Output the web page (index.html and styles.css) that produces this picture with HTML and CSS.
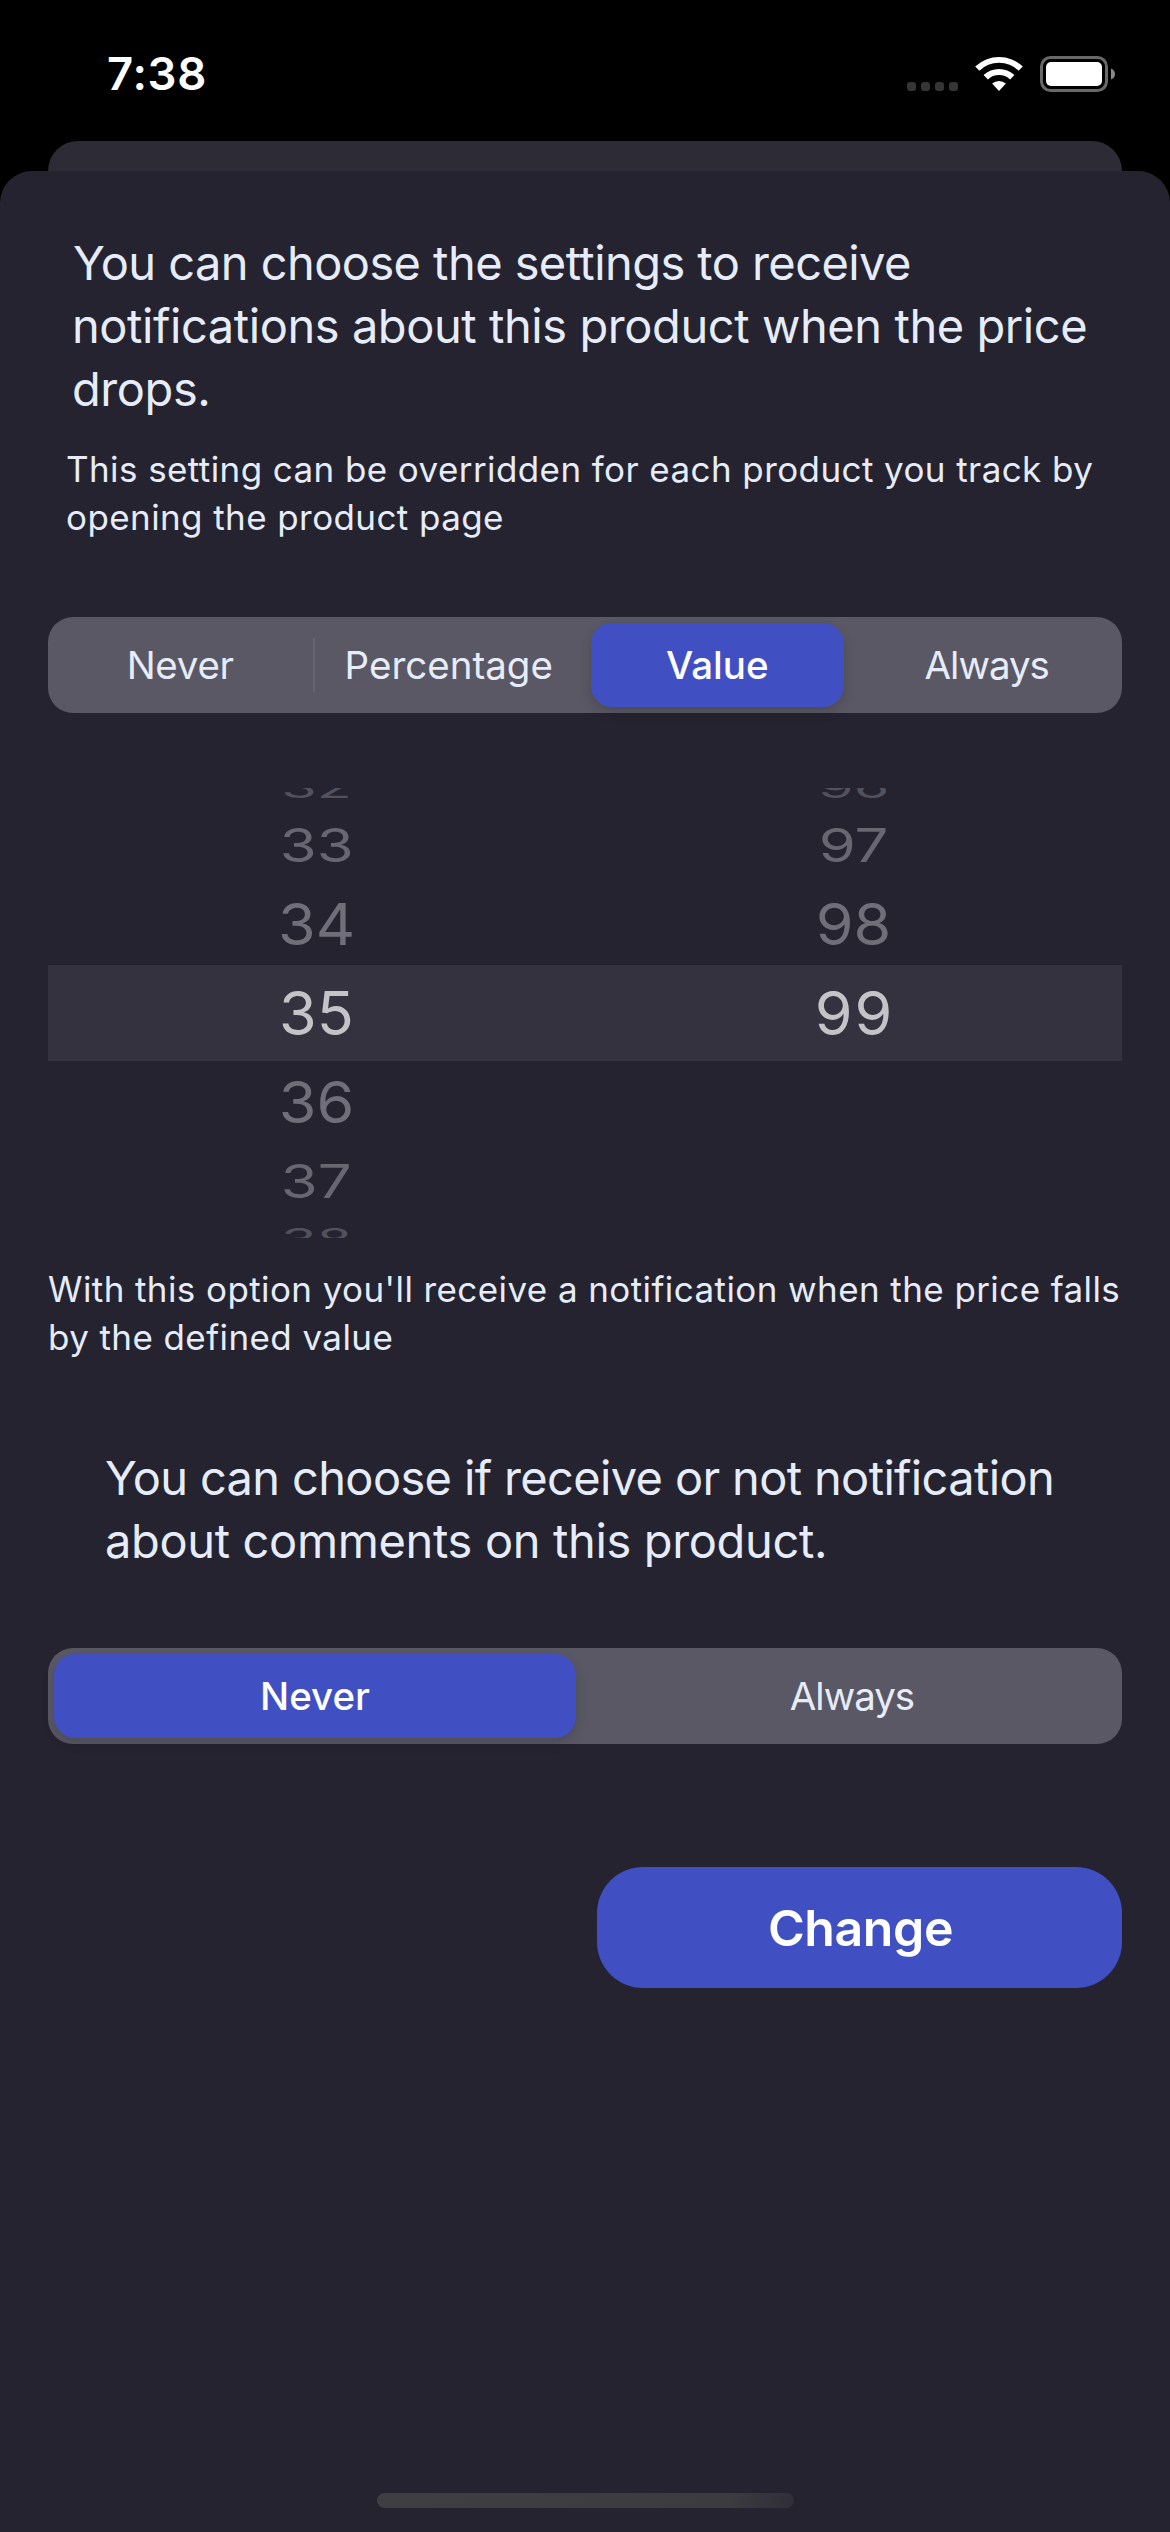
FILE: index.html
```html
<!DOCTYPE html>
<html lang="en">
<head>
<meta charset="utf-8">
<title>Notification settings</title>
<link rel="stylesheet" href="styles.css">
</head>
<body>
<header class="status">
  <div class="time">7:38</div>
  <div class="indicators">
    <div class="signal"><i></i><i></i><i></i><i></i></div>
    <svg class="wifi" width="50" height="38" viewBox="0 0 50 38">
      <path d="M1.2 11.6A34.5 34.5 0 0 1 48.8 11.6L44.6 15.8A28 28 0 0 0 5.4 15.8Z"/>
      <path d="M9.6 20.1A22.4 22.4 0 0 1 40.4 20.1L36.1 24.4A16.2 16.2 0 0 0 13.9 24.4Z"/>
      <path d="M18.1 28.6A10.4 10.4 0 0 1 31.9 28.6L25 36Z"/>
    </svg>
    <svg class="battery" width="76" height="36" viewBox="0 0 76 36">
      <rect x="1.5" y="1.5" width="65" height="33" rx="9" fill="none" stroke="#696969" stroke-width="3"/>
      <rect x="6" y="6" width="56" height="24" rx="5" fill="#fff"/>
      <path d="M71 12.5Q75 14 75 18Q75 22 71 23.5Z" fill="#8a8a8a"/>
    </svg>
  </div>
</header>
<div class="card-behind"></div>
<main class="sheet">
  <p class="lead"><span class="l1">You can choose the settings to receive</span><br><span class="l2">notifications about this product when the price</span><br><span class="l2">drops.</span></p>
  <p class="note inset">This setting can be overridden for each product you track by<br>opening the product page</p>

  <div class="segmented four">
    <div class="segment divided"><span class="never">Never</span></div>
    <div class="segment"><span>Percentage</span></div>
    <div class="segment selected"><span>Value</span></div>
    <div class="segment last"><span class="always">Always</span></div>
  </div>

  <div class="picker">
    <div class="wheel">
      <div class="row far"><span>32</span></div>
      <div class="row mid"><span>33</span></div>
      <div class="row near"><span>34</span></div>
      <div class="row current"><span>35</span></div>
      <div class="row near"><span>36</span></div>
      <div class="row mid"><span>37</span></div>
      <div class="row far"><span>38</span></div>
    </div>
    <div class="wheel">
      <div class="row far"><span>96</span></div>
      <div class="row mid"><span>97</span></div>
      <div class="row near"><span>98</span></div>
      <div class="row current wide"><span>99</span></div>
    </div>
  </div>

  <p class="note">With this option you'll receive a notification when the price falls<br>by the defined value</p>
  <p class="lead comments"><span class="l3">You can choose if receive or not notification</span><br><span class="l4">about comments on this product.</span></p>

  <div class="segmented two">
    <div class="segment selected"><span>Never</span></div>
    <div class="segment"><span class="always">Always</span></div>
  </div>

  <button class="change">Change</button>
  <div class="home"></div>
</main>
</body>
</html>
```
FILE: styles.css
```css
* { box-sizing: border-box; }

body {
  margin: 0;
  width: 1170px;
  height: 2532px;
  display: flex;
  flex-direction: column;
  overflow: hidden;
  background: #000;
  color: #e6ecf9;
  font-family: Inter, "Liberation Sans", sans-serif;
}

p { margin: 0; white-space: nowrap; }

.status {
  height: 141px;
  padding: 0 54px 0 107px;
  display: flex;
  justify-content: space-between;
}

.time {
  padding-top: 46px;
  color: #fff;
  font-size: 45.5px;
  font-weight: 600;
  line-height: 56px;
  letter-spacing: 0.7px;
}

.indicators { display: flex; }

.signal {
  display: flex;
  gap: 5px;
  padding-top: 82px;
  margin-right: 16px;
}

.signal i {
  width: 9px;
  height: 9px;
  border-radius: 3px;
  background: #353535;
}

.wifi { margin: 55px 16px 0 0; fill: #fff; }
.battery { margin-top: 56px; }

.card-behind {
  flex: none;
  height: 30px;
  margin: 0 48px;
  border-radius: 30px 30px 0 0;
  background: #2d2b35;
}

.sheet {
  flex: 1;
  display: flex;
  flex-direction: column;
  padding: 60px 48px 24px;
  border-radius: 32px 32px 0 0;
  background: #252330;
}

.lead {
  padding-left: 25px;
  font-size: 47px;
  line-height: 63px;
  letter-spacing: -0.43px;
}

.l1 { letter-spacing: -0.567px; }
.l2 { margin-left: -1px; }
.l3 { letter-spacing: -0.646px; }
.l4 { letter-spacing: -0.355px; }

.note {
  font-size: 35px;
  line-height: 48px;
  letter-spacing: 0.41px;
}

.note.inset { padding-left: 18px; margin-top: 25px; }

.segmented {
  flex: none;
  display: grid;
  height: 96px;
  border-radius: 25px;
  background: #5a5864;
  font-size: 38.5px;
}

.four { grid-template-columns: repeat(4, 1fr); margin-top: 76px; }
.two { grid-template-columns: repeat(2, 1fr); margin-top: 76px; }

.segment {
  display: flex;
  align-items: center;
  justify-content: center;
  padding-bottom: 1px;
  margin: 6px 10px 6px 6px;
  border-radius: 21px;
}

.two .segment { margin-right: 9px; }

.segment.selected {
  background: #4050c3;
  color: #fff;
  font-weight: 500;
  box-shadow: 0 5px 12px rgba(0, 0, 0, 0.16);
}

.segment.divided {
  margin: 21px 2px 21px 0;
  padding-bottom: 1px;
  border-right: 2px solid #66646f;
  border-radius: 0;
}

.segment.last { padding-left: 2px; }
.never { letter-spacing: -0.26px; }
.always { letter-spacing: -1px; }

.picker {
  flex: none;
  display: grid;
  grid-template-columns: repeat(2, 1fr);
  height: 450px;
  margin-top: 75px;
  overflow: hidden;
}

.wheel { margin-top: -20px; }

.row {
  display: flex;
  align-items: center;
  justify-content: center;
  font-size: 61px;
  line-height: 70px;
}

.row.far { height: 38px; color: #53515d; }
.row.mid { height: 77.5px; color: #686670; }
.row.near { height: 81.5px; color: #706e78; }
.row.current { height: 96px; background: #35323f; color: #c4c3c8; }
.row.far span { transform: scale(0.94, 0.48); }
.row.mid span { transform: scale(0.98, 0.77); }
.row.near span { transform: scale(1, 0.95); }
.row.wide span { letter-spacing: 2px; margin-right: -2px; }

.picker + .note { margin-top: 27px; }
.comments { margin-top: 85px; padding-left: 57px; }

.change {
  flex: none;
  align-self: flex-end;
  width: 525px;
  height: 121px;
  margin-top: 123px;
  padding: 0 0 0 2px;
  border: 0;
  border-radius: 46px;
  background: #4050c3;
  color: #fff;
  font: 600 50px/60px Inter, "Liberation Sans", sans-serif;
  letter-spacing: -0.4px;
}

.home {
  width: 417px;
  height: 15px;
  margin: auto auto 0;
  border-radius: 8px;
  background: linear-gradient(100deg, #3f3e42 0%, #3c3b3f 84%, #302e39 100%);
}
```
